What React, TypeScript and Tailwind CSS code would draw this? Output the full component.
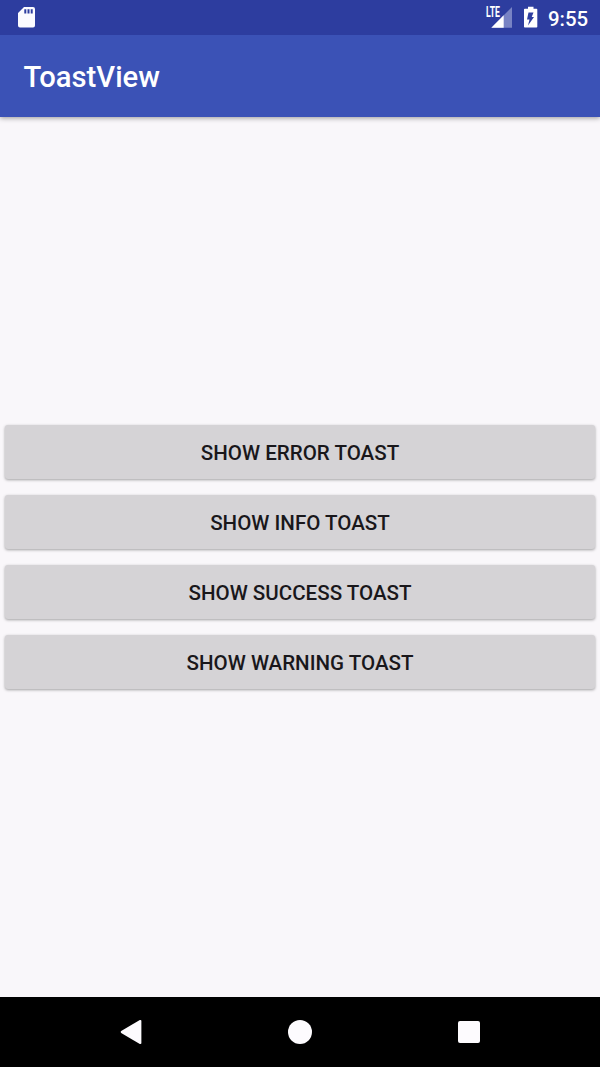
const actions = ['Show error toast', 'Show info toast', 'Show success toast', 'Show warning toast'];

function StatusBar() {
  return (
    <div className="z-10 flex h-[35px] shrink-0 items-start bg-[#2d3d9f] text-white">
      <svg className="ml-[18px] mt-[7px]" width="17" height="21" viewBox="0 0 17 21" fill="#fbfbff" aria-label="SD card">
        <path fillRule="evenodd" d="M6 0H15Q17 0 17 2V18.500Q17 20.500 15 20.500H2Q0 20.500 0 18.500V6ZM6.300 2.300V6.600H8.300V2.300ZM9.500 2.300V6.600H11.500V2.300ZM12.700 2.300V6.600H14.700V2.300Z" />
      </svg>
      <svg className="ml-auto" width="30" height="30" viewBox="-2 -6 30 30" aria-label="LTE signal">
        <path d="M26 1V21.700H5.300Z" fill="#7883c4" />
        <path d="M17.700 9.300V21.700H5.300Z" fill="#fff" />
        <path d="M0 0H14.300V11.500H0Z" fill="#2d3d9f" />
        <text x="0" y="10.900" fontSize="14" fontWeight="700" fill="#fff" textLength="14" lengthAdjust="spacingAndGlyphs" className="font-['Roboto',sans-serif]">LTE</text>
      </svg>
      <svg className="ml-[10px] mt-[6px]" width="14" height="22" viewBox="0 0 14 22" aria-label="Battery charging">
        <path fillRule="evenodd" d="M4 .7H9.500V2.700H12.500Q13.300 2.700 13.300 3.500V20.700Q13.300 21.500 12.500 21.500H.8Q0 21.500 0 20.700V3.500Q0 2.700 .8 2.700H4ZM4.500 6.500L3 13.500H5.500L4 19.500L10 11H7.700L9.500 6.500Z" fill="#fff" />
      </svg>
      <span className="ml-[10px] mr-[11px] mt-[6.500px] w-[41px] whitespace-nowrap text-[20.400px] leading-6 font-medium">9:55</span>
    </div>
  );
}

export default function App() {
  return (
    <div className="flex h-[1067px] w-[600px] flex-col overflow-hidden bg-[#f9f7fa] font-['Roboto',sans-serif]">
      <StatusBar />
      <header className="flex h-[81.500px] shrink-0 items-center bg-[#3b52b6] pl-[23.500px] pt-[4px] shadow-[0_1px_5px_rgba(0,0,0,0.4)]">
        <h1 className="text-[29.200px] leading-none font-medium text-white">ToastView</h1>
      </header>
      <main className="flex flex-1 flex-col justify-center gap-4 pl-[5.300px] pr-[5.300px]">
        {actions.map((label) => (
          <button
            key={label}
            className="h-[54px] w-full rounded-[3px] bg-[#d5d3d6] pt-[3px] text-[20.550px] leading-none font-medium text-[#19171b] uppercase shadow-[0_1px_3px_rgba(0,0,0,0.36)]"
          >
            {label}
          </button>
        ))}
      </main>
      <nav className="flex h-[70px] shrink-0 items-center justify-between bg-black px-[119px]">
        <button aria-label="Back">
          <svg width="24" height="26" viewBox="0 0 24 26" fill="#fdfbfe">
            <path d="M2.200 12Q1 13 2.200 14L20.800 24.900Q22.400 25.300 22.400 24V2Q22.400 .7 20.800 1.100Z" />
          </svg>
        </button>
        <button aria-label="Home" className="size-6 rounded-full bg-[#fdfbfe]" />
        <div className="flex w-6 justify-center">
          <button aria-label="Recent apps" className="size-[22px] rounded-[2px] bg-[#fdfbfe]" />
        </div>
      </nav>
    </div>
  );
}
